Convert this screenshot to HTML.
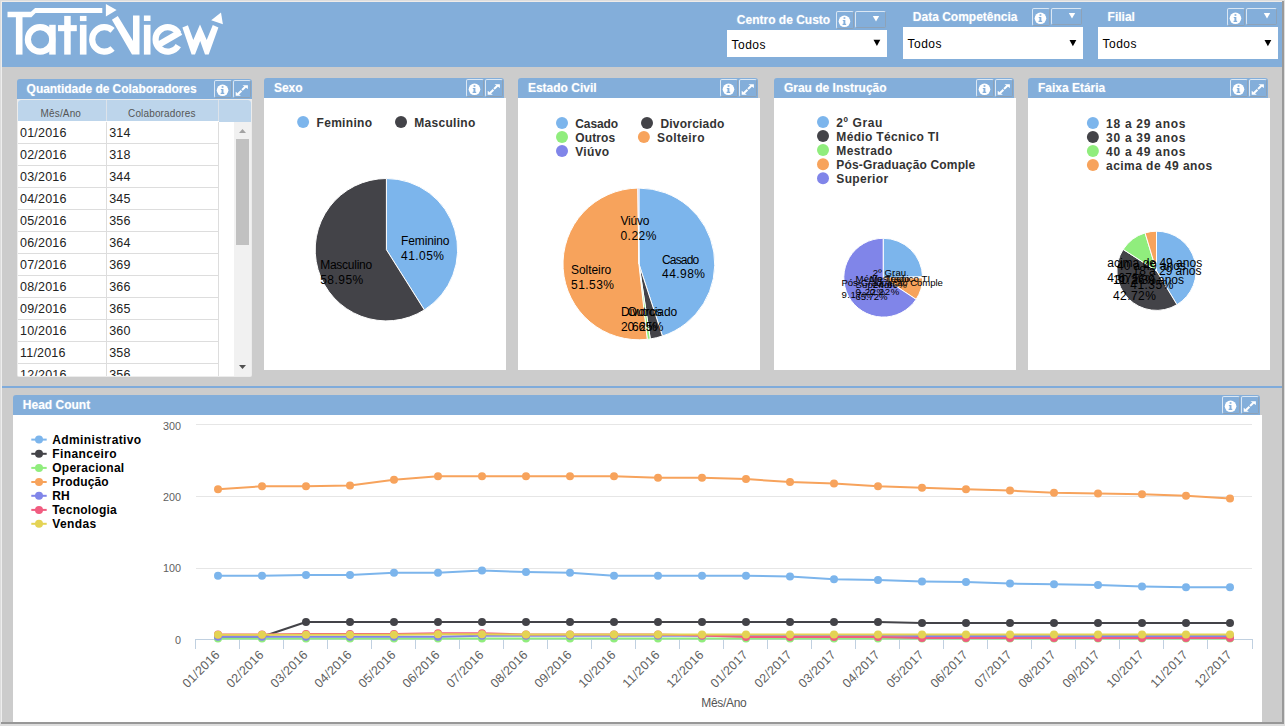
<!DOCTYPE html>
<html><head><meta charset="utf-8"><title>TaticView</title>
<style>
html,body{margin:0;padding:0}
body{width:1285px;height:726px;overflow:hidden;background:#ccc;position:relative;font-family:"Liberation Sans",sans-serif}
div,span{position:absolute;box-sizing:border-box}
svg{position:absolute;left:0;top:0;overflow:visible}
svg text{font-family:"Liberation Sans",sans-serif}
.hd{background:#83aeda;border-radius:3px 3px 0 0;height:20px}
.tt{color:#fff;font-weight:bold;font-size:12px;line-height:14px;white-space:nowrap;text-shadow:0 0 1.5px rgba(255,255,255,.4)}
.btn{width:18px;height:18px;border:1px solid;border-color:rgba(255,255,255,.7) rgba(150,150,150,.5) rgba(150,150,150,.5) rgba(255,255,255,.7);border-radius:2px}
.dd{width:31px;height:17px;border:1px solid;border-color:rgba(255,255,255,.7) rgba(150,150,150,.5) rgba(150,150,150,.5) rgba(255,255,255,.7);border-radius:2px}
.sel{background:#fff}
.cnt{background:#fff}
.row{left:0;width:201px;height:22px;border-bottom:1px solid #ddd}
.row i{position:absolute;left:88px;top:0;width:1px;height:22px;background:#ddd}
.row b{position:absolute;font-weight:normal;font-style:normal;font-size:12.5px;line-height:14px;color:#222;top:4px;letter-spacing:.2px}
</style></head><body>

<div style="left:2px;top:2px;width:1280px;height:65px;background:#83aeda"></div>
<div style="left:0;top:0;width:1285px;height:1px;background:#ddd"></div>
<div style="left:1px;top:1px;width:1283px;height:1px;background:#efebe8"></div>
<div style="left:0;top:0;width:1px;height:726px;background:#ddd"></div>
<div style="left:1px;top:2px;width:1px;height:720px;background:#eee"></div>
<div style="left:1282px;top:1px;width:2px;height:723px;background:#999"></div>
<div style="left:1284px;top:0;width:1px;height:726px;background:#ddd"></div>
<div style="left:1px;top:722px;width:1283px;height:2px;background:#979797"></div>
<div style="left:0;top:724px;width:1285px;height:2px;background:#ddd"></div>
<div style="left:2px;top:386px;width:1280px;height:2px;background:#7fabdb"></div>
<svg width="240" height="68" viewBox="0 0 240 68">
<g fill="#fff" stroke="none">
<polygon points="7.5,11.7 30.9,11.7 35.1,8 102.3,8 102.3,13.1 35.6,13.1 31.4,17.3 7.5,17.3"/>
<polygon points="105.9,3.9 116.6,10.1 105.9,16.4"/>
<rect x="15.9" y="17" width="6.6" height="37.6"/>
<rect x="49.2" y="24.8" width="6.5" height="29.8"/>
<rect x="64.2" y="15.9" width="6.5" height="38.7"/>
<rect x="58" y="25.1" width="18.8" height="6.1"/>
<rect x="79.9" y="24.8" width="6.6" height="29.8"/>
<rect x="79.9" y="15.9" width="6.6" height="5.2"/>
<polygon points="111.9,19.7 117.8,16 133,40.9 133,15.5 139.5,15.5 139.5,54.6 132,54.6"/>
<rect x="143.9" y="24.8" width="6.6" height="29.8"/>
<rect x="143.9" y="15.5" width="6.6" height="5.5"/>
<polygon points="182.4,27.5 187.9,25.2 193.3,40 200,24.4 206.7,40 212.8,25 218.4,27.5 208.7,54.6 205,54.6 200.2,40.9 195,54.6 191.6,54.6"/>
<polygon points="211.2,20.2 221,12.6 222.9,24.2"/>
</g>
<g fill="none" stroke="#fff" stroke-width="6.2">
<circle cx="40.1" cy="39.4" r="12.2"/>

<path d="M112.56,48.47A12.2,12.2 0 1 1 112.56,30.33"/>
<path d="M178.26,45.68A12.2,12.2 0 1 1 178.37,33.30"/>
<line x1="157.3" y1="45.5" x2="180.6" y2="32" stroke-width="6.5"/>
</g></svg>
<div class="tt" style="left:736.8px;top:13.299999999999999px">Centro de Custo</div>
<div class="btn" style="left:836px;top:11px"></div>
<div class="dd" style="left:855px;top:11px"></div>
<div class="sel" style="left:727px;top:30px;width:160px;height:27px"></div>
<div class="tt" style="left:912.8px;top:9.6px">Data Competência</div>
<div class="btn" style="left:1032px;top:8px"></div>
<div class="dd" style="left:1051px;top:8px"></div>
<div class="sel" style="left:903px;top:27px;width:180px;height:32px"></div>
<div class="tt" style="left:1107.6px;top:9.799999999999999px">Filial</div>
<div class="btn" style="left:1227px;top:8px"></div>
<div class="dd" style="left:1246px;top:8px"></div>
<div class="sel" style="left:1098px;top:27px;width:180px;height:32px"></div>
<svg width="1285" height="726"><circle cx="844.45" cy="21.3" r="5.8" fill="#fff"/><g fill="#83aeda"><rect x="843.5500000000001" y="17.200000000000003" width="1.8" height="1.6"/><path d="M842.75,20.0h2.6v3.8h0.8v1.2h-3.6v-1.2h0.9v-2.7h-0.7z"/></g>
<polygon points="872.8,16 879.2,16 876,21.6" fill="#fff"/>
<text x="731.6" y="48.9" font-size="12" font-weight="normal" fill="#000" text-anchor="start" textLength="33.8" lengthAdjust="spacing">Todos</text>
<polygon points="873.5,39.7 880.3,39.7 876.9,45.900000000000006" fill="#000"/>
<circle cx="1040.45" cy="18.3" r="5.8" fill="#fff"/><g fill="#83aeda"><rect x="1039.55" y="14.200000000000001" width="1.8" height="1.6"/><path d="M1038.75,17.0h2.6v3.8h0.8v1.2h-3.6v-1.2h0.9v-2.7h-0.7z"/></g>
<polygon points="1068.8,13 1075.2,13 1072,18.6" fill="#fff"/>
<text x="907.6" y="47.9" font-size="12" font-weight="normal" fill="#000" text-anchor="start" textLength="33.8" lengthAdjust="spacing">Todos</text>
<polygon points="1069.5,40 1076.3000000000002,40 1072.9,46.2" fill="#000"/>
<circle cx="1235.45" cy="18.3" r="5.8" fill="#fff"/><g fill="#83aeda"><rect x="1234.55" y="14.200000000000001" width="1.8" height="1.6"/><path d="M1233.75,17.0h2.6v3.8h0.8v1.2h-3.6v-1.2h0.9v-2.7h-0.7z"/></g>
<polygon points="1263.8,13 1270.2,13 1267,18.6" fill="#fff"/>
<text x="1102.6" y="47.9" font-size="12" font-weight="normal" fill="#000" text-anchor="start" textLength="33.8" lengthAdjust="spacing">Todos</text>
<polygon points="1264.5,40 1271.3000000000002,40 1267.9,46.2" fill="#000"/></svg>
<div class="hd" style="left:17px;top:79px;width:235px"></div>
<div class="tt" style="left:26.6px;top:81.7px;letter-spacing:-.05px">Quantidade de Colaboradores</div>
<div class="btn" style="left:214px;top:80px"></div><div class="btn" style="left:233px;top:80px"></div>
<div style="left:17px;top:99px;width:235.3px;height:278.4px;background:#ececec;border-radius:0 0 2px 2px"></div>
<div style="left:18px;top:100px;width:233.3px;height:276px;background:#fff;overflow:hidden;border-radius:3px 3px 0 0">
<div style="left:0;top:0;width:201px;height:21px;background:#bdd5eb"></div><div style="left:201px;top:0;width:34px;height:21.6px;background:#bdd5eb"></div>
<div style="left:88px;top:0;width:1px;height:21px;background:#dde3ea"></div><div style="left:200px;top:0;width:1px;height:21px;background:#dde3ea"></div>
<div style="left:-1.2px;top:7.7px;width:88px;text-align:center;font-size:10px;line-height:11px;color:#555;letter-spacing:.15px">Mês/Ano</div>
<div style="left:88.3px;top:7.7px;width:111px;text-align:center;font-size:10px;line-height:11px;color:#555;letter-spacing:.15px">Colaboradores</div>
<div class="row" style="top:22px"><i></i><b style="left:2px">01/2016</b><b style="left:91.2px">314</b></div>
<div class="row" style="top:44px"><i></i><b style="left:2px">02/2016</b><b style="left:91.2px">318</b></div>
<div class="row" style="top:66px"><i></i><b style="left:2px">03/2016</b><b style="left:91.2px">344</b></div>
<div class="row" style="top:88px"><i></i><b style="left:2px">04/2016</b><b style="left:91.2px">345</b></div>
<div class="row" style="top:110px"><i></i><b style="left:2px">05/2016</b><b style="left:91.2px">356</b></div>
<div class="row" style="top:132px"><i></i><b style="left:2px">06/2016</b><b style="left:91.2px">364</b></div>
<div class="row" style="top:154px"><i></i><b style="left:2px">07/2016</b><b style="left:91.2px">369</b></div>
<div class="row" style="top:176px"><i></i><b style="left:2px">08/2016</b><b style="left:91.2px">366</b></div>
<div class="row" style="top:198px"><i></i><b style="left:2px">09/2016</b><b style="left:91.2px">365</b></div>
<div class="row" style="top:220px"><i></i><b style="left:2px">10/2016</b><b style="left:91.2px">360</b></div>
<div class="row" style="top:242px"><i></i><b style="left:2px">11/2016</b><b style="left:91.2px">358</b></div>
<div class="row" style="top:264px"><i></i><b style="left:2px">12/2016</b><b style="left:91.2px">356</b></div>
<div style="left:200px;top:22px;width:1px;height:260px;background:#ddd"></div>
<div style="left:216px;top:22px;width:17.5px;height:254px;background:#f1f1f1"></div>
<div style="left:218px;top:38.5px;width:13px;height:106.5px;background:#c1c1c1"></div>
</div>
<div class="hd" style="left:264px;top:78px;width:240px"></div>
<div class="tt" style="left:273.9px;top:80.9px">Sexo</div>
<div class="btn" style="left:466px;top:79px"></div><div class="btn" style="left:485px;top:79px"></div>
<div class="cnt" style="left:264px;top:98px;width:242px;height:272px"></div>
<div class="hd" style="left:518px;top:78px;width:240px"></div>
<div class="tt" style="left:527.9px;top:80.9px">Estado Civil</div>
<div class="btn" style="left:720px;top:79px"></div><div class="btn" style="left:739px;top:79px"></div>
<div class="cnt" style="left:518px;top:98px;width:241.6px;height:271.6px"></div>
<div class="hd" style="left:774px;top:78px;width:240px"></div>
<div class="tt" style="left:783.9px;top:80.9px">Grau de Instrução</div>
<div class="btn" style="left:976px;top:79px"></div><div class="btn" style="left:995px;top:79px"></div>
<div class="cnt" style="left:774px;top:98px;width:242px;height:272px"></div>
<div class="hd" style="left:1028px;top:78px;width:240px"></div>
<div class="tt" style="left:1037.9px;top:80.9px">Faixa Etária</div>
<div class="btn" style="left:1230px;top:79px"></div><div class="btn" style="left:1249px;top:79px"></div>
<div class="cnt" style="left:1028px;top:98px;width:241.6px;height:271.6px"></div>
<div class="hd" style="left:13px;top:395px;width:1247px"></div>
<div class="tt" style="left:22.8px;top:397.7px">Head Count</div>
<div class="btn" style="left:1222px;top:396px"></div><div class="btn" style="left:1241px;top:396px"></div>
<div class="cnt" style="left:13px;top:415px;width:1249px;height:307px"></div>
<svg width="1285" height="726"><circle cx="222.55" cy="90.3" r="5.8" fill="#fff"/><g fill="#83aeda"><rect x="221.65" y="86.2" width="1.8" height="1.6"/><path d="M220.85000000000002,89.0h2.6v3.8h0.8v1.2h-3.6v-1.2h0.9v-2.7h-0.7z"/></g>
<g fill="#fff" stroke="none" transform="translate(233,80)"><polygon points="2.7,11.7 2.7,15.75 7.9,15.75"/><polygon points="9.5,5.15 14.85,5.15 14.85,8.9"/><polygon points="5.7,14.75 4.3,13.25 7.75,9.95 9.15,11.45"/><polygon points="13.1,7.55 11.7,6.05 8.35,9.25 9.75,10.75"/></g>
<polygon points="239,133 246,133 242.5,129" fill="#a3a3a3"/>
<polygon points="239,365 246,365 242.5,369" fill="#505050"/>
<circle cx="474.5" cy="89.3" r="5.8" fill="#fff"/><g fill="#83aeda"><rect x="473.6" y="85.2" width="1.8" height="1.6"/><path d="M472.8,88.0h2.6v3.8h0.8v1.2h-3.6v-1.2h0.9v-2.7h-0.7z"/></g>
<g fill="#fff" stroke="none" transform="translate(485,79)"><polygon points="2.7,11.7 2.7,15.75 7.9,15.75"/><polygon points="9.5,5.15 14.85,5.15 14.85,8.9"/><polygon points="5.7,14.75 4.3,13.25 7.75,9.95 9.15,11.45"/><polygon points="13.1,7.55 11.7,6.05 8.35,9.25 9.75,10.75"/></g>
<circle cx="728.5" cy="89.3" r="5.8" fill="#fff"/><g fill="#83aeda"><rect x="727.6" y="85.2" width="1.8" height="1.6"/><path d="M726.8,88.0h2.6v3.8h0.8v1.2h-3.6v-1.2h0.9v-2.7h-0.7z"/></g>
<g fill="#fff" stroke="none" transform="translate(739,79)"><polygon points="2.7,11.7 2.7,15.75 7.9,15.75"/><polygon points="9.5,5.15 14.85,5.15 14.85,8.9"/><polygon points="5.7,14.75 4.3,13.25 7.75,9.95 9.15,11.45"/><polygon points="13.1,7.55 11.7,6.05 8.35,9.25 9.75,10.75"/></g>
<circle cx="984.5" cy="89.3" r="5.8" fill="#fff"/><g fill="#83aeda"><rect x="983.6" y="85.2" width="1.8" height="1.6"/><path d="M982.8,88.0h2.6v3.8h0.8v1.2h-3.6v-1.2h0.9v-2.7h-0.7z"/></g>
<g fill="#fff" stroke="none" transform="translate(995,79)"><polygon points="2.7,11.7 2.7,15.75 7.9,15.75"/><polygon points="9.5,5.15 14.85,5.15 14.85,8.9"/><polygon points="5.7,14.75 4.3,13.25 7.75,9.95 9.15,11.45"/><polygon points="13.1,7.55 11.7,6.05 8.35,9.25 9.75,10.75"/></g>
<circle cx="1238.5" cy="89.3" r="5.8" fill="#fff"/><g fill="#83aeda"><rect x="1237.6" y="85.2" width="1.8" height="1.6"/><path d="M1236.8,88.0h2.6v3.8h0.8v1.2h-3.6v-1.2h0.9v-2.7h-0.7z"/></g>
<g fill="#fff" stroke="none" transform="translate(1249,79)"><polygon points="2.7,11.7 2.7,15.75 7.9,15.75"/><polygon points="9.5,5.15 14.85,5.15 14.85,8.9"/><polygon points="5.7,14.75 4.3,13.25 7.75,9.95 9.15,11.45"/><polygon points="13.1,7.55 11.7,6.05 8.35,9.25 9.75,10.75"/></g>
<circle cx="303.1" cy="122" r="6" fill="#7cb5ec"/><text x="316.5" y="126.8" font-size="12" font-weight="bold" fill="#333" text-anchor="start" textLength="55.5" lengthAdjust="spacing">Feminino</text>
<circle cx="401" cy="122" r="6" fill="#434348"/><text x="414.3" y="126.8" font-size="12" font-weight="bold" fill="#333" text-anchor="start" textLength="61" lengthAdjust="spacing">Masculino</text>
<path d="M386.4,249.7L386.40,178.50A71.2,71.2 0 0 1 424.36,309.94Z" fill="#7cb5ec" stroke="#fff" stroke-width="1" stroke-linejoin="round"/>
<path d="M386.4,249.7L424.36,309.94A71.2,71.2 0 1 1 386.40,178.50Z" fill="#434348" stroke="#fff" stroke-width="1" stroke-linejoin="round"/>
<text x="401" y="245.3" font-size="12" font-weight="normal" fill="#000" text-anchor="start" textLength="48.5" lengthAdjust="spacing">Feminino</text><text x="401" y="259.6" font-size="12" font-weight="normal" fill="#000" text-anchor="start" textLength="43" lengthAdjust="spacing">41.05%</text>
<text x="320.2" y="269.2" font-size="12" font-weight="normal" fill="#000" text-anchor="start" textLength="52" lengthAdjust="spacing">Masculino</text><text x="320.2" y="283.6" font-size="12" font-weight="normal" fill="#000" text-anchor="start" textLength="43" lengthAdjust="spacing">58.95%</text>
<circle cx="562" cy="123.1" r="6" fill="#7cb5ec"/><text x="575.2" y="127.8" font-size="12" font-weight="bold" fill="#333" text-anchor="start" textLength="43" lengthAdjust="spacing">Casado</text>
<circle cx="647" cy="123.1" r="6" fill="#434348"/><text x="660.4" y="127.8" font-size="12" font-weight="bold" fill="#333" text-anchor="start" textLength="64" lengthAdjust="spacing">Divorciado</text>
<circle cx="562" cy="137.1" r="6" fill="#90ed7d"/><text x="575.2" y="141.8" font-size="12" font-weight="bold" fill="#333" text-anchor="start" textLength="40" lengthAdjust="spacing">Outros</text>
<circle cx="643.9" cy="137.1" r="6" fill="#f7a35c"/><text x="657" y="141.8" font-size="12" font-weight="bold" fill="#333" text-anchor="start" textLength="47.5" lengthAdjust="spacing">Solteiro</text>
<circle cx="562" cy="151" r="6" fill="#8085e9"/><text x="575.2" y="155.8" font-size="12" font-weight="bold" fill="#333" text-anchor="start" textLength="34" lengthAdjust="spacing">Viúvo</text>
<path d="M638.9,263.95L638.90,188.10A75.85,75.85 0 0 1 662.43,336.06Z" fill="#7cb5ec" stroke="#fff" stroke-width="1" stroke-linejoin="round"/>
<path d="M638.9,263.95L662.43,336.06A75.85,75.85 0 0 1 650.29,338.94Z" fill="#434348" stroke="#fff" stroke-width="1" stroke-linejoin="round"/>
<path d="M638.9,263.95L650.29,338.94A75.85,75.85 0 0 1 647.22,339.34Z" fill="#90ed7d" stroke="#fff" stroke-width="1" stroke-linejoin="round"/>
<path d="M638.9,263.95L647.22,339.34A75.85,75.85 0 1 1 637.85,188.11Z" fill="#f7a35c" stroke="#fff" stroke-width="1" stroke-linejoin="round"/>
<path d="M638.9,263.95L637.85,188.11A75.85,75.85 0 0 1 638.90,188.10Z" fill="#8085e9" stroke="#fff" stroke-width="1" stroke-linejoin="round"/>
<text x="620.4" y="224.9" font-size="12" font-weight="normal" fill="#000" text-anchor="start" textLength="29" lengthAdjust="spacing">Viúvo</text><text x="620.4" y="239.6" font-size="12" font-weight="normal" fill="#000" text-anchor="start" textLength="36" lengthAdjust="spacing">0.22%</text>
<text x="662" y="263.5" font-size="12" font-weight="normal" fill="#000" text-anchor="start" textLength="37.2" lengthAdjust="spacing">Casado</text><text x="662" y="278.3" font-size="12" font-weight="normal" fill="#000" text-anchor="start" textLength="43" lengthAdjust="spacing">44.98%</text>
<text x="571" y="273.8" font-size="12" font-weight="normal" fill="#000" text-anchor="start" textLength="40.3" lengthAdjust="spacing">Solteiro</text><text x="571" y="288.5" font-size="12" font-weight="normal" fill="#000" text-anchor="start" textLength="43" lengthAdjust="spacing">51.53%</text>
<text x="621" y="316" font-size="12" font-weight="normal" fill="#000" text-anchor="start" textLength="56.3" lengthAdjust="spacing">Divorciado</text><text x="621" y="331" font-size="12" font-weight="normal" fill="#000" text-anchor="start" textLength="36" lengthAdjust="spacing">2.62%</text>
<text x="627.5" y="316" font-size="12" font-weight="normal" fill="#000" text-anchor="start" textLength="34.3" lengthAdjust="spacing">Outros</text><text x="627.5" y="331" font-size="12" font-weight="normal" fill="#000" text-anchor="start" textLength="36" lengthAdjust="spacing">0.65%</text>
<circle cx="823" cy="122" r="6" fill="#7cb5ec"/><text x="836.3" y="126.7" font-size="12" font-weight="bold" fill="#333" text-anchor="start" textLength="46" lengthAdjust="spacing">2º Grau</text>
<circle cx="823" cy="136.1" r="6" fill="#434348"/><text x="836.3" y="140.79999999999998" font-size="12" font-weight="bold" fill="#333" text-anchor="start" textLength="102.5" lengthAdjust="spacing">Médio Técnico TI</text>
<circle cx="823" cy="150.1" r="6" fill="#90ed7d"/><text x="836.3" y="154.79999999999998" font-size="12" font-weight="bold" fill="#333" text-anchor="start" textLength="56" lengthAdjust="spacing">Mestrado</text>
<circle cx="823" cy="164.2" r="6" fill="#f7a35c"/><text x="836.3" y="168.89999999999998" font-size="12" font-weight="bold" fill="#333" text-anchor="start" textLength="139" lengthAdjust="spacing">Pós-Graduação Comple</text>
<circle cx="823" cy="178.2" r="6" fill="#8085e9"/><text x="836.3" y="182.89999999999998" font-size="12" font-weight="bold" fill="#333" text-anchor="start" textLength="51.8" lengthAdjust="spacing">Superior</text>
<path d="M883.2,277.7L883.20,238.30A39.4,39.4 0 0 1 922.59,276.86Z" fill="#7cb5ec" stroke="#fff" stroke-width="1" stroke-linejoin="round"/>
<path d="M883.2,277.7L922.59,276.86A39.4,39.4 0 0 1 922.60,277.41Z" fill="#434348" stroke="#fff" stroke-width="1" stroke-linejoin="round"/>
<path d="M883.2,277.7L922.60,277.41A39.4,39.4 0 0 1 922.60,277.95Z" fill="#90ed7d" stroke="#fff" stroke-width="1" stroke-linejoin="round"/>
<path d="M883.2,277.7L922.60,277.95A39.4,39.4 0 0 1 916.10,299.38Z" fill="#f7a35c" stroke="#fff" stroke-width="1" stroke-linejoin="round"/>
<path d="M883.2,277.7L916.10,299.38A39.4,39.4 0 1 1 883.20,238.30Z" fill="#8085e9" stroke="#fff" stroke-width="1" stroke-linejoin="round"/>
<text x="872.7" y="275.7" font-size="9.6" font-weight="normal" fill="#000" text-anchor="start" textLength="33.5" lengthAdjust="spacing">2º Grau</text><text x="872.7" y="288.2" font-size="9.6" font-weight="normal" fill="#000" text-anchor="start" textLength="34" lengthAdjust="spacing">24.66%</text>
<text x="855.6" y="281.5" font-size="9.6" font-weight="normal" fill="#000" text-anchor="start" textLength="74.5" lengthAdjust="spacing">Médio Técnico TI</text><text x="855.6" y="295.2" font-size="9.6" font-weight="normal" fill="#000" text-anchor="start" textLength="29.5" lengthAdjust="spacing">0.22%</text>
<text x="869.7" y="281.8" font-size="9.6" font-weight="normal" fill="#000" text-anchor="start" textLength="40" lengthAdjust="spacing">Mestrado</text><text x="869.7" y="295.2" font-size="9.6" font-weight="normal" fill="#000" text-anchor="start" textLength="29.5" lengthAdjust="spacing">0.22%</text>
<text x="841.4" y="285.5" font-size="9.6" font-weight="normal" fill="#000" text-anchor="start" textLength="101.5" lengthAdjust="spacing">Pós-Graduação Comple</text><text x="841.4" y="298.4" font-size="9.6" font-weight="normal" fill="#000" text-anchor="start" textLength="29.5" lengthAdjust="spacing">9.17%</text>
<text x="855.6" y="287.7" font-size="9.6" font-weight="normal" fill="#000" text-anchor="start" textLength="37" lengthAdjust="spacing">Superior</text><text x="855.6" y="300.1" font-size="9.6" font-weight="normal" fill="#000" text-anchor="start" textLength="32" lengthAdjust="spacing">65.72%</text>
<circle cx="1092.9" cy="123.1" r="6" fill="#7cb5ec"/><text x="1106" y="127.8" font-size="12" font-weight="bold" fill="#333" text-anchor="start" textLength="79.5" lengthAdjust="spacing">18 a 29 anos</text>
<circle cx="1092.9" cy="137.1" r="6" fill="#434348"/><text x="1106" y="141.79999999999998" font-size="12" font-weight="bold" fill="#333" text-anchor="start" textLength="79.5" lengthAdjust="spacing">30 a 39 anos</text>
<circle cx="1092.9" cy="151" r="6" fill="#90ed7d"/><text x="1106" y="155.7" font-size="12" font-weight="bold" fill="#333" text-anchor="start" textLength="79.5" lengthAdjust="spacing">40 a 49 anos</text>
<circle cx="1092.9" cy="165" r="6" fill="#f7a35c"/><text x="1106" y="169.7" font-size="12" font-weight="bold" fill="#333" text-anchor="start" textLength="106.3" lengthAdjust="spacing">acima de 49 anos</text>
<path d="M1156.5,270.8L1156.50,231.20A39.6,39.6 0 0 1 1176.98,304.69Z" fill="#7cb5ec" stroke="#fff" stroke-width="1" stroke-linejoin="round"/>
<path d="M1156.5,270.8L1176.98,304.69A39.6,39.6 0 0 1 1123.16,249.43Z" fill="#434348" stroke="#fff" stroke-width="1" stroke-linejoin="round"/>
<path d="M1156.5,270.8L1123.16,249.43A39.6,39.6 0 0 1 1145.05,232.89Z" fill="#90ed7d" stroke="#fff" stroke-width="1" stroke-linejoin="round"/>
<path d="M1156.5,270.8L1145.05,232.89A39.6,39.6 0 0 1 1156.50,231.20Z" fill="#f7a35c" stroke="#fff" stroke-width="1" stroke-linejoin="round"/>
<text x="1107.2" y="267.4" font-size="12" font-weight="normal" fill="#000" text-anchor="start" textLength="95" lengthAdjust="spacing">acima de 49 anos</text><text x="1107.2" y="282.2" font-size="12" font-weight="normal" fill="#000" text-anchor="start" textLength="36" lengthAdjust="spacing">4.67%</text>
<text x="1117" y="269.9" font-size="12" font-weight="normal" fill="#000" text-anchor="start" textLength="69" lengthAdjust="spacing">40 a 49 anos</text><text x="1113" y="284.4" font-size="12" font-weight="normal" fill="#000" text-anchor="start" textLength="43" lengthAdjust="spacing">11.26%</text>
<text x="1132.5" y="274.7" font-size="12" font-weight="normal" fill="#000" text-anchor="start" textLength="69" lengthAdjust="spacing">18 a 29 anos</text><text x="1130.3" y="289.4" font-size="12" font-weight="normal" fill="#000" text-anchor="start" textLength="43" lengthAdjust="spacing">41.35%</text>
<text x="1115" y="284.4" font-size="12" font-weight="normal" fill="#000" text-anchor="start" textLength="69" lengthAdjust="spacing">30 a 39 anos</text><text x="1112.9" y="299.5" font-size="12" font-weight="normal" fill="#000" text-anchor="start" textLength="43" lengthAdjust="spacing">42.72%</text>
<circle cx="1230.55" cy="406.3" r="5.8" fill="#fff"/><g fill="#83aeda"><rect x="1229.6499999999999" y="402.2" width="1.8" height="1.6"/><path d="M1228.85,405.0h2.6v3.8h0.8v1.2h-3.6v-1.2h0.9v-2.7h-0.7z"/></g>
<g fill="#fff" stroke="none" transform="translate(1241,396)"><polygon points="2.7,11.7 2.7,15.75 7.9,15.75"/><polygon points="9.5,5.15 14.85,5.15 14.85,8.9"/><polygon points="5.7,14.75 4.3,13.25 7.75,9.95 9.15,11.45"/><polygon points="13.1,7.55 11.7,6.05 8.35,9.25 9.75,10.75"/></g>
<path d="M31.3,439.6H46.7" stroke="#7cb5ec" stroke-width="2"/><circle cx="39" cy="439.6" r="4" fill="#7cb5ec"/>
<text x="52.2" y="444.0" font-size="12" font-weight="bold" fill="#000" text-anchor="start" textLength="89" lengthAdjust="spacing">Administrativo</text>
<path d="M31.3,453.8H46.7" stroke="#434348" stroke-width="2"/><circle cx="39" cy="453.8" r="4" fill="#434348"/>
<text x="52.2" y="458.2" font-size="12" font-weight="bold" fill="#000" text-anchor="start" textLength="64.5" lengthAdjust="spacing">Financeiro</text>
<path d="M31.3,467.9H46.7" stroke="#90ed7d" stroke-width="2"/><circle cx="39" cy="467.9" r="4" fill="#90ed7d"/>
<text x="52.2" y="472.29999999999995" font-size="12" font-weight="bold" fill="#000" text-anchor="start" textLength="72" lengthAdjust="spacing">Operacional</text>
<path d="M31.3,482H46.7" stroke="#f7a35c" stroke-width="2"/><circle cx="39" cy="482" r="4" fill="#f7a35c"/>
<text x="52.2" y="486.4" font-size="12" font-weight="bold" fill="#000" text-anchor="start" textLength="56.5" lengthAdjust="spacing">Produção</text>
<path d="M31.3,495.8H46.7" stroke="#8085e9" stroke-width="2"/><circle cx="39" cy="495.8" r="4" fill="#8085e9"/>
<text x="52.2" y="500.2" font-size="12" font-weight="bold" fill="#000" text-anchor="start" textLength="17.5" lengthAdjust="spacing">RH</text>
<path d="M31.3,509.9H46.7" stroke="#f15c80" stroke-width="2"/><circle cx="39" cy="509.9" r="4" fill="#f15c80"/>
<text x="52.2" y="514.3" font-size="12" font-weight="bold" fill="#000" text-anchor="start" textLength="64.5" lengthAdjust="spacing">Tecnologia</text>
<path d="M31.3,523.8H46.7" stroke="#e4d354" stroke-width="2"/><circle cx="39" cy="523.8" r="4" fill="#e4d354"/>
<text x="52.2" y="528.1999999999999" font-size="12" font-weight="bold" fill="#000" text-anchor="start" textLength="44" lengthAdjust="spacing">Vendas</text>
<path d="M196,424.5H1252" stroke="#e6e6e6" stroke-width="1"/>
<path d="M196,496.5H1252" stroke="#e6e6e6" stroke-width="1"/>
<path d="M196,568.5H1252" stroke="#e6e6e6" stroke-width="1"/>
<text x="181" y="429.5" font-size="10.8" font-weight="normal" fill="#606060" text-anchor="end">300</text>
<text x="181" y="500.5" font-size="10.8" font-weight="normal" fill="#606060" text-anchor="end">200</text>
<text x="181" y="571.5" font-size="10.8" font-weight="normal" fill="#606060" text-anchor="end">100</text>
<text x="181" y="644.0" font-size="10.8" font-weight="normal" fill="#606060" text-anchor="end">0</text>
<path d="M195,639.5H1253" stroke="#c0d0e0" stroke-width="1"/>
<path d="M195.5,639.5v9.5M239.5,639.5v9.5M283.5,639.5v9.5M327.5,639.5v9.5M371.5,639.5v9.5M415.5,639.5v9.5M459.5,639.5v9.5M503.5,639.5v9.5M547.5,639.5v9.5M591.5,639.5v9.5M635.5,639.5v9.5M679.5,639.5v9.5M723.5,639.5v9.5M767.5,639.5v9.5M811.5,639.5v9.5M855.5,639.5v9.5M899.5,639.5v9.5M943.5,639.5v9.5M987.5,639.5v9.5M1031.5,639.5v9.5M1075.5,639.5v9.5M1119.5,639.5v9.5M1163.5,639.5v9.5M1207.5,639.5v9.5M1252.5,639.5v9.5" stroke="#c0d0e0" stroke-width="1"/>
<polyline points="218,575.7 262,575.7 306,574.9 350,574.9 394,572.8 438,572.8 482,570.6 526,572.1 570,572.8 614,575.7 658,575.7 702,575.7 746,575.7 790,576.4 834,579.3 878,580.0 922,581.4 966,582.1 1010,583.6 1054,584.3 1098,585.0 1142,586.5 1186,587.2 1230,587.2" fill="none" stroke="#7cb5ec" stroke-width="2" stroke-linejoin="round" stroke-linecap="round"/>
<circle cx="218" cy="575.7" r="4" fill="#7cb5ec"/><circle cx="262" cy="575.7" r="4" fill="#7cb5ec"/><circle cx="306" cy="574.9" r="4" fill="#7cb5ec"/><circle cx="350" cy="574.9" r="4" fill="#7cb5ec"/><circle cx="394" cy="572.8" r="4" fill="#7cb5ec"/><circle cx="438" cy="572.8" r="4" fill="#7cb5ec"/><circle cx="482" cy="570.6" r="4" fill="#7cb5ec"/><circle cx="526" cy="572.1" r="4" fill="#7cb5ec"/><circle cx="570" cy="572.8" r="4" fill="#7cb5ec"/><circle cx="614" cy="575.7" r="4" fill="#7cb5ec"/><circle cx="658" cy="575.7" r="4" fill="#7cb5ec"/><circle cx="702" cy="575.7" r="4" fill="#7cb5ec"/><circle cx="746" cy="575.7" r="4" fill="#7cb5ec"/><circle cx="790" cy="576.4" r="4" fill="#7cb5ec"/><circle cx="834" cy="579.3" r="4" fill="#7cb5ec"/><circle cx="878" cy="580.0" r="4" fill="#7cb5ec"/><circle cx="922" cy="581.4" r="4" fill="#7cb5ec"/><circle cx="966" cy="582.1" r="4" fill="#7cb5ec"/><circle cx="1010" cy="583.6" r="4" fill="#7cb5ec"/><circle cx="1054" cy="584.3" r="4" fill="#7cb5ec"/><circle cx="1098" cy="585.0" r="4" fill="#7cb5ec"/><circle cx="1142" cy="586.5" r="4" fill="#7cb5ec"/><circle cx="1186" cy="587.2" r="4" fill="#7cb5ec"/><circle cx="1230" cy="587.2" r="4" fill="#7cb5ec"/>
<polyline points="218,636.8 262,636.8 306,622.0 350,622.0 394,622.0 438,622.0 482,622.0 526,622.0 570,622.0 614,622.0 658,622.0 702,622.0 746,622.0 790,622.0 834,622.0 878,622.0 922,623.0 966,623.0 1010,623.0 1054,623.0 1098,623.0 1142,623.0 1186,623.0 1230,623.0" fill="none" stroke="#434348" stroke-width="2" stroke-linejoin="round" stroke-linecap="round"/>
<circle cx="218" cy="636.8" r="4" fill="#434348"/><circle cx="262" cy="636.8" r="4" fill="#434348"/><circle cx="306" cy="622.0" r="4" fill="#434348"/><circle cx="350" cy="622.0" r="4" fill="#434348"/><circle cx="394" cy="622.0" r="4" fill="#434348"/><circle cx="438" cy="622.0" r="4" fill="#434348"/><circle cx="482" cy="622.0" r="4" fill="#434348"/><circle cx="526" cy="622.0" r="4" fill="#434348"/><circle cx="570" cy="622.0" r="4" fill="#434348"/><circle cx="614" cy="622.0" r="4" fill="#434348"/><circle cx="658" cy="622.0" r="4" fill="#434348"/><circle cx="702" cy="622.0" r="4" fill="#434348"/><circle cx="746" cy="622.0" r="4" fill="#434348"/><circle cx="790" cy="622.0" r="4" fill="#434348"/><circle cx="834" cy="622.0" r="4" fill="#434348"/><circle cx="878" cy="622.0" r="4" fill="#434348"/><circle cx="922" cy="623.0" r="4" fill="#434348"/><circle cx="966" cy="623.0" r="4" fill="#434348"/><circle cx="1010" cy="623.0" r="4" fill="#434348"/><circle cx="1054" cy="623.0" r="4" fill="#434348"/><circle cx="1098" cy="623.0" r="4" fill="#434348"/><circle cx="1142" cy="623.0" r="4" fill="#434348"/><circle cx="1186" cy="623.0" r="4" fill="#434348"/><circle cx="1230" cy="623.0" r="4" fill="#434348"/>
<polyline points="218,638.6 262,638.6 306,638.6 350,638.6 394,638.6 438,638.6 482,638.6 526,638.6 570,638.6 614,638.6 658,638.6 702,638.6 746,638.6 790,638.6 834,638.6 878,638.6 922,638.6 966,638.6 1010,638.6 1054,638.6 1098,638.6 1142,638.6 1186,638.6 1230,638.6" fill="none" stroke="#90ed7d" stroke-width="2" stroke-linejoin="round" stroke-linecap="round"/>
<circle cx="218" cy="638.6" r="4" fill="#90ed7d"/><circle cx="262" cy="638.6" r="4" fill="#90ed7d"/><circle cx="306" cy="638.6" r="4" fill="#90ed7d"/><circle cx="350" cy="638.6" r="4" fill="#90ed7d"/><circle cx="394" cy="638.6" r="4" fill="#90ed7d"/><circle cx="438" cy="638.6" r="4" fill="#90ed7d"/><circle cx="482" cy="638.6" r="4" fill="#90ed7d"/><circle cx="526" cy="638.6" r="4" fill="#90ed7d"/><circle cx="570" cy="638.6" r="4" fill="#90ed7d"/><circle cx="614" cy="638.6" r="4" fill="#90ed7d"/><circle cx="658" cy="638.6" r="4" fill="#90ed7d"/><circle cx="702" cy="638.6" r="4" fill="#90ed7d"/><circle cx="746" cy="638.6" r="4" fill="#90ed7d"/><circle cx="790" cy="638.6" r="4" fill="#90ed7d"/><circle cx="834" cy="638.6" r="4" fill="#90ed7d"/><circle cx="878" cy="638.6" r="4" fill="#90ed7d"/><circle cx="922" cy="638.6" r="4" fill="#90ed7d"/><circle cx="966" cy="638.6" r="4" fill="#90ed7d"/><circle cx="1010" cy="638.6" r="4" fill="#90ed7d"/><circle cx="1054" cy="638.6" r="4" fill="#90ed7d"/><circle cx="1098" cy="638.6" r="4" fill="#90ed7d"/><circle cx="1142" cy="638.6" r="4" fill="#90ed7d"/><circle cx="1186" cy="638.6" r="4" fill="#90ed7d"/><circle cx="1230" cy="638.6" r="4" fill="#90ed7d"/>
<polyline points="218,489.2 262,486.3 306,486.3 350,485.6 394,479.8 438,476.2 482,476.2 526,476.2 570,476.2 614,476.2 658,477.7 702,477.7 746,479.1 790,482.0 834,483.4 878,486.3 922,487.8 966,489.2 1010,490.6 1054,492.8 1098,493.5 1142,494.2 1186,495.7 1230,498.6" fill="none" stroke="#f7a35c" stroke-width="2" stroke-linejoin="round" stroke-linecap="round"/>
<circle cx="218" cy="489.2" r="4" fill="#f7a35c"/><circle cx="262" cy="486.3" r="4" fill="#f7a35c"/><circle cx="306" cy="486.3" r="4" fill="#f7a35c"/><circle cx="350" cy="485.6" r="4" fill="#f7a35c"/><circle cx="394" cy="479.8" r="4" fill="#f7a35c"/><circle cx="438" cy="476.2" r="4" fill="#f7a35c"/><circle cx="482" cy="476.2" r="4" fill="#f7a35c"/><circle cx="526" cy="476.2" r="4" fill="#f7a35c"/><circle cx="570" cy="476.2" r="4" fill="#f7a35c"/><circle cx="614" cy="476.2" r="4" fill="#f7a35c"/><circle cx="658" cy="477.7" r="4" fill="#f7a35c"/><circle cx="702" cy="477.7" r="4" fill="#f7a35c"/><circle cx="746" cy="479.1" r="4" fill="#f7a35c"/><circle cx="790" cy="482.0" r="4" fill="#f7a35c"/><circle cx="834" cy="483.4" r="4" fill="#f7a35c"/><circle cx="878" cy="486.3" r="4" fill="#f7a35c"/><circle cx="922" cy="487.8" r="4" fill="#f7a35c"/><circle cx="966" cy="489.2" r="4" fill="#f7a35c"/><circle cx="1010" cy="490.6" r="4" fill="#f7a35c"/><circle cx="1054" cy="492.8" r="4" fill="#f7a35c"/><circle cx="1098" cy="493.5" r="4" fill="#f7a35c"/><circle cx="1142" cy="494.2" r="4" fill="#f7a35c"/><circle cx="1186" cy="495.7" r="4" fill="#f7a35c"/><circle cx="1230" cy="498.6" r="4" fill="#f7a35c"/>
<polyline points="218,636.8 262,636.8 306,636.8 350,636.8 394,636.8 438,636.8 482,635.7 526,635.7 570,635.7 614,635.7 658,635.7 702,635.7 746,635.7 790,635.7 834,635.7 878,635.7 922,635.9 966,635.9 1010,635.9 1054,635.9 1098,635.9 1142,635.9 1186,635.9 1230,635.9" fill="none" stroke="#8085e9" stroke-width="2" stroke-linejoin="round" stroke-linecap="round"/>
<circle cx="218" cy="636.8" r="4" fill="#8085e9"/><circle cx="262" cy="636.8" r="4" fill="#8085e9"/><circle cx="306" cy="636.8" r="4" fill="#8085e9"/><circle cx="350" cy="636.8" r="4" fill="#8085e9"/><circle cx="394" cy="636.8" r="4" fill="#8085e9"/><circle cx="438" cy="636.8" r="4" fill="#8085e9"/><circle cx="482" cy="635.7" r="4" fill="#8085e9"/><circle cx="526" cy="635.7" r="4" fill="#8085e9"/><circle cx="570" cy="635.7" r="4" fill="#8085e9"/><circle cx="614" cy="635.7" r="4" fill="#8085e9"/><circle cx="658" cy="635.7" r="4" fill="#8085e9"/><circle cx="702" cy="635.7" r="4" fill="#8085e9"/><circle cx="746" cy="635.7" r="4" fill="#8085e9"/><circle cx="790" cy="635.7" r="4" fill="#8085e9"/><circle cx="834" cy="635.7" r="4" fill="#8085e9"/><circle cx="878" cy="635.7" r="4" fill="#8085e9"/><circle cx="922" cy="635.9" r="4" fill="#8085e9"/><circle cx="966" cy="635.9" r="4" fill="#8085e9"/><circle cx="1010" cy="635.9" r="4" fill="#8085e9"/><circle cx="1054" cy="635.9" r="4" fill="#8085e9"/><circle cx="1098" cy="635.9" r="4" fill="#8085e9"/><circle cx="1142" cy="635.9" r="4" fill="#8085e9"/><circle cx="1186" cy="635.9" r="4" fill="#8085e9"/><circle cx="1230" cy="635.9" r="4" fill="#8085e9"/>
<polyline points="218,634.4 262,634.4 306,633.9 350,633.9 394,633.9 438,633.2 482,633.2 526,634.5 570,634.5 614,634.5 658,634.5 702,635.6 746,637.1 790,637.1 834,637.1 878,637.1 922,637.9 966,637.9 1010,637.9 1054,637.9 1098,637.9 1142,637.9 1186,637.9 1230,637.9" fill="none" stroke="#f15c80" stroke-width="2" stroke-linejoin="round" stroke-linecap="round"/>
<circle cx="218" cy="634.4" r="4" fill="#f15c80"/><circle cx="262" cy="634.4" r="4" fill="#f15c80"/><circle cx="306" cy="633.9" r="4" fill="#f15c80"/><circle cx="350" cy="633.9" r="4" fill="#f15c80"/><circle cx="394" cy="633.9" r="4" fill="#f15c80"/><circle cx="438" cy="633.2" r="4" fill="#f15c80"/><circle cx="482" cy="633.2" r="4" fill="#f15c80"/><circle cx="526" cy="634.5" r="4" fill="#f15c80"/><circle cx="570" cy="634.5" r="4" fill="#f15c80"/><circle cx="614" cy="634.5" r="4" fill="#f15c80"/><circle cx="658" cy="634.5" r="4" fill="#f15c80"/><circle cx="702" cy="635.6" r="4" fill="#f15c80"/><circle cx="746" cy="637.1" r="4" fill="#f15c80"/><circle cx="790" cy="637.1" r="4" fill="#f15c80"/><circle cx="834" cy="637.1" r="4" fill="#f15c80"/><circle cx="878" cy="637.1" r="4" fill="#f15c80"/><circle cx="922" cy="637.9" r="4" fill="#f15c80"/><circle cx="966" cy="637.9" r="4" fill="#f15c80"/><circle cx="1010" cy="637.9" r="4" fill="#f15c80"/><circle cx="1054" cy="637.9" r="4" fill="#f15c80"/><circle cx="1098" cy="637.9" r="4" fill="#f15c80"/><circle cx="1142" cy="637.9" r="4" fill="#f15c80"/><circle cx="1186" cy="637.9" r="4" fill="#f15c80"/><circle cx="1230" cy="637.9" r="4" fill="#f15c80"/>
<polyline points="218,634.8 262,634.8 306,634.8 350,634.8 394,634.8 438,634.2 482,634.2 526,634.5 570,634.5 614,634.5 658,634.5 702,634.5 746,634.5 790,634.5 834,634.5 878,634.5 922,634.5 966,634.5 1010,634.5 1054,634.5 1098,634.5 1142,634.5 1186,634.5 1230,634.5" fill="none" stroke="#e4d354" stroke-width="2" stroke-linejoin="round" stroke-linecap="round"/>
<circle cx="218" cy="634.8" r="4" fill="#e4d354"/><circle cx="262" cy="634.8" r="4" fill="#e4d354"/><circle cx="306" cy="634.8" r="4" fill="#e4d354"/><circle cx="350" cy="634.8" r="4" fill="#e4d354"/><circle cx="394" cy="634.8" r="4" fill="#e4d354"/><circle cx="438" cy="634.2" r="4" fill="#e4d354"/><circle cx="482" cy="634.2" r="4" fill="#e4d354"/><circle cx="526" cy="634.5" r="4" fill="#e4d354"/><circle cx="570" cy="634.5" r="4" fill="#e4d354"/><circle cx="614" cy="634.5" r="4" fill="#e4d354"/><circle cx="658" cy="634.5" r="4" fill="#e4d354"/><circle cx="702" cy="634.5" r="4" fill="#e4d354"/><circle cx="746" cy="634.5" r="4" fill="#e4d354"/><circle cx="790" cy="634.5" r="4" fill="#e4d354"/><circle cx="834" cy="634.5" r="4" fill="#e4d354"/><circle cx="878" cy="634.5" r="4" fill="#e4d354"/><circle cx="922" cy="634.5" r="4" fill="#e4d354"/><circle cx="966" cy="634.5" r="4" fill="#e4d354"/><circle cx="1010" cy="634.5" r="4" fill="#e4d354"/><circle cx="1054" cy="634.5" r="4" fill="#e4d354"/><circle cx="1098" cy="634.5" r="4" fill="#e4d354"/><circle cx="1142" cy="634.5" r="4" fill="#e4d354"/><circle cx="1186" cy="634.5" r="4" fill="#e4d354"/><circle cx="1230" cy="634.5" r="4" fill="#e4d354"/>
<text transform="translate(220.3,655.6) rotate(-45)" font-size="12.5" fill="#606060" text-anchor="end" textLength="46.5" lengthAdjust="spacing">01/2016</text>
<text transform="translate(264.3,655.6) rotate(-45)" font-size="12.5" fill="#606060" text-anchor="end" textLength="46.5" lengthAdjust="spacing">02/2016</text>
<text transform="translate(308.3,655.6) rotate(-45)" font-size="12.5" fill="#606060" text-anchor="end" textLength="46.5" lengthAdjust="spacing">03/2016</text>
<text transform="translate(352.3,655.6) rotate(-45)" font-size="12.5" fill="#606060" text-anchor="end" textLength="46.5" lengthAdjust="spacing">04/2016</text>
<text transform="translate(396.3,655.6) rotate(-45)" font-size="12.5" fill="#606060" text-anchor="end" textLength="46.5" lengthAdjust="spacing">05/2016</text>
<text transform="translate(440.3,655.6) rotate(-45)" font-size="12.5" fill="#606060" text-anchor="end" textLength="46.5" lengthAdjust="spacing">06/2016</text>
<text transform="translate(484.3,655.6) rotate(-45)" font-size="12.5" fill="#606060" text-anchor="end" textLength="46.5" lengthAdjust="spacing">07/2016</text>
<text transform="translate(528.3,655.6) rotate(-45)" font-size="12.5" fill="#606060" text-anchor="end" textLength="46.5" lengthAdjust="spacing">08/2016</text>
<text transform="translate(572.3,655.6) rotate(-45)" font-size="12.5" fill="#606060" text-anchor="end" textLength="46.5" lengthAdjust="spacing">09/2016</text>
<text transform="translate(616.3,655.6) rotate(-45)" font-size="12.5" fill="#606060" text-anchor="end" textLength="46.5" lengthAdjust="spacing">10/2016</text>
<text transform="translate(660.3,655.6) rotate(-45)" font-size="12.5" fill="#606060" text-anchor="end" textLength="46.5" lengthAdjust="spacing">11/2016</text>
<text transform="translate(704.3,655.6) rotate(-45)" font-size="12.5" fill="#606060" text-anchor="end" textLength="46.5" lengthAdjust="spacing">12/2016</text>
<text transform="translate(748.3,655.6) rotate(-45)" font-size="12.5" fill="#606060" text-anchor="end" textLength="46.5" lengthAdjust="spacing">01/2017</text>
<text transform="translate(792.3,655.6) rotate(-45)" font-size="12.5" fill="#606060" text-anchor="end" textLength="46.5" lengthAdjust="spacing">02/2017</text>
<text transform="translate(836.3,655.6) rotate(-45)" font-size="12.5" fill="#606060" text-anchor="end" textLength="46.5" lengthAdjust="spacing">03/2017</text>
<text transform="translate(880.3,655.6) rotate(-45)" font-size="12.5" fill="#606060" text-anchor="end" textLength="46.5" lengthAdjust="spacing">04/2017</text>
<text transform="translate(924.3,655.6) rotate(-45)" font-size="12.5" fill="#606060" text-anchor="end" textLength="46.5" lengthAdjust="spacing">05/2017</text>
<text transform="translate(968.3,655.6) rotate(-45)" font-size="12.5" fill="#606060" text-anchor="end" textLength="46.5" lengthAdjust="spacing">06/2017</text>
<text transform="translate(1012.3,655.6) rotate(-45)" font-size="12.5" fill="#606060" text-anchor="end" textLength="46.5" lengthAdjust="spacing">07/2017</text>
<text transform="translate(1056.3,655.6) rotate(-45)" font-size="12.5" fill="#606060" text-anchor="end" textLength="46.5" lengthAdjust="spacing">08/2017</text>
<text transform="translate(1100.3,655.6) rotate(-45)" font-size="12.5" fill="#606060" text-anchor="end" textLength="46.5" lengthAdjust="spacing">09/2017</text>
<text transform="translate(1144.3,655.6) rotate(-45)" font-size="12.5" fill="#606060" text-anchor="end" textLength="46.5" lengthAdjust="spacing">10/2017</text>
<text transform="translate(1188.3,655.6) rotate(-45)" font-size="12.5" fill="#606060" text-anchor="end" textLength="46.5" lengthAdjust="spacing">11/2017</text>
<text transform="translate(1232.3,655.6) rotate(-45)" font-size="12.5" fill="#606060" text-anchor="end" textLength="46.5" lengthAdjust="spacing">12/2017</text>
<text x="724" y="706.5" font-size="12" font-weight="normal" fill="#555" text-anchor="middle" textLength="45.5" lengthAdjust="spacing">Mês/Ano</text></svg>
</body></html>
